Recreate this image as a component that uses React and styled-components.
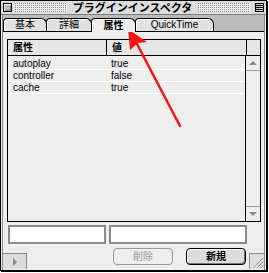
import React from "react";
import styled, { createGlobalStyle } from "styled-components";

const GlobalStyle = createGlobalStyle`
  html, body {
    margin: 0;
    padding: 0;
    background: #fff;
  }
  body {
    font-family: "Liberation Sans", "Noto Sans CJK JP", sans-serif;
    font-size: 10px;
    color: #000;
  }
`;

const tabs = [
  { label: "基本", width: 44 },
  { label: "詳細", width: 46 },
  { label: "属性", width: 45, active: true },
  { label: "QuickTime", width: 79 },
];

const rows = [
  { name: "autoplay", value: "true" },
  { name: "controller", value: "false" },
  { name: "cache", value: "true" },
];

const App = () => {
  return (
    <Stage>
      <GlobalStyle />
      <Window>
        <TitleBar>
          <CloseBox />
          <Stripes />
          <Title>プラグインインスペクタ</Title>
          <Stripes />
          <ShadeBox>
            <span />
            <span />
            <span />
          </ShadeBox>
        </TitleBar>
        <Body>
          <Frame>
            <TabStrip>
              {tabs.map((t) => (
                <Tab key={t.label} width={t.width} active={t.active}>
                  {t.label}
                </Tab>
              ))}
            </TabStrip>
            <Panel>
              <ListWrap>
                <List>
                  <Header>
                    <HeadCell width={98}>属性</HeadCell>
                    <HeadCell grow>値</HeadCell>
                    <HeadCell width={14} />
                  </Header>
                  <ListBody>
                    <Rows>
                      {rows.map((r) => (
                        <Row key={r.name}>
                          <NameCell>{r.name}</NameCell>
                          <ValueCell>{r.value}</ValueCell>
                        </Row>
                      ))}
                    </Rows>
                    <ScrollBar>
                      <ArrowBox>
                        <ArrowUp />
                      </ArrowBox>
                      <Track />
                      <ArrowBox bottom>
                        <ArrowDown />
                      </ArrowBox>
                    </ScrollBar>
                  </ListBody>
                </List>
              </ListWrap>
              <FieldRow>
                <Field width={98} />
                <Field width={138} />
              </FieldRow>
              <Footer>
                <ScrollStub>
                  <StubArrow />
                </ScrollStub>
                <Button disabled>削除</Button>
                <Button primary>新規</Button>
                <GrowBox>
                  <svg width="15" height="15" viewBox="0 0 15 15">
                    <path d="M5 14 L14 5 M9 14 L14 9 M13 14 L14 13" stroke="#fff" strokeWidth="1" />
                    <path d="M4 14 L14 4 M8 14 L14 8 M12 14 L14 12" stroke="#777" strokeWidth="1" />
                  </svg>
                </GrowBox>
              </Footer>
            </Panel>
          </Frame>
        </Body>
      </Window>
      <Annotation width="269" height="273" viewBox="0 0 269 273">
        <line x1="137" y1="44" x2="180" y2="126" stroke="#f51414" strokeWidth="2.5" strokeLinecap="round" />
        <path d="M128 29 L147 42 L138 43 L130 50 Z" fill="#f51414" />
      </Annotation>
    </Stage>
  );
};

const Stage = styled.div`
  position: relative;
  width: 269px;
  height: 273px;
  overflow: hidden;
`;

const Window = styled.div`
  box-sizing: border-box;
  width: 267px;
  height: 271px;
  border: 1px solid #000;
  box-shadow: 1px 1px 0 #000;
  background: #eee;
  display: flex;
  flex-direction: column;
`;

const TitleBar = styled.div`
  height: 13px;
  border-bottom: 1px solid #7a7a7a;
  background: #ddd;
  display: flex;
  align-items: center;
  padding: 0 2px 0 2px;
  gap: 3px;
`;

const CloseBox = styled.div`
  box-sizing: border-box;
  width: 9px;
  height: 9px;
  border: 1px solid #000;
  background: #bbb;
  box-shadow: inset 1px 1px 0 #fff, inset -1px -1px 0 #888;
`;

const Stripes = styled.div`
  flex: 1;
  height: 9px;
  background:
    linear-gradient(90deg, transparent 1px, #eee 1px) 0 0 / 2px 2px,
    linear-gradient(transparent 1px, #eee 1px) 0 0 / 2px 2px,
    #8a8a8a;
`;

const Title = styled.div`
  padding: 0 3px;
  font-family: "Noto Sans CJK JP", sans-serif;
  font-size: 11px;
  font-weight: 700;
  line-height: 13px;
  white-space: nowrap;
`;

const ShadeBox = styled.div`
  box-sizing: border-box;
  width: 9px;
  height: 9px;
  margin-left: 2px;
  border: 1px solid #000;
  background: #ccc;
  display: flex;
  flex-direction: column;
  justify-content: space-between;
  padding: 1px 0;

  span {
    display: block;
    height: 1px;
    background: #000;
  }
`;

const Body = styled.div`
  flex: 1;
  display: flex;
  padding: 0 1px;
  background: #eee;
`;

const Frame = styled.div`
  flex: 1;
  display: flex;
  flex-direction: column;
  border-left: 1px solid #8a8a8a;
  border-right: 1px solid #8a8a8a;
`;

const TabStrip = styled.div`
  height: 16px;
  box-sizing: border-box;
  padding-top: 3px;
  background: #bbb;
  display: flex;
  align-items: flex-start;
`;

const Tab = styled.div`
  box-sizing: border-box;
  width: ${(p) => p.width}px;
  height: ${(p) => (p.active ? 14 : 13)}px;
  margin-left: -1px;
  &:first-child {
    margin-left: 0;
  }
  border: 1px solid #000;
  border-bottom: none;
  border-radius: 4px 6px 0 0;
  background: ${(p) => (p.active ? "#eee" : "#e2e2e2")};
  box-shadow: inset 1px 1px 0 #fff;
  position: relative;
  z-index: ${(p) => (p.active ? 2 : 1)};
  display: flex;
  align-items: center;
  justify-content: center;
  font-size: 10px;
  font-weight: ${(p) => (p.active ? 700 : 400)};
  line-height: 12px;
`;

const Panel = styled.div`
  flex: 1;
  display: flex;
  flex-direction: column;
  border-top: 1px solid #000;
  background: #eee;
`;

const ListWrap = styled.div`
  padding: 7px 3px 0 4px;
`;

const List = styled.div`
  box-sizing: border-box;
  height: 183px;
  border: 1px solid #000;
  display: flex;
  flex-direction: column;
  background: #eee;
`;

const Header = styled.div`
  height: 15px;
  border-bottom: 1px solid #000;
  display: flex;
  background: #e6e6e6;
`;

const HeadCell = styled.div`
  box-sizing: border-box;
  width: ${(p) => (p.width ? `${p.width}px` : "auto")};
  flex: ${(p) => (p.grow ? 1 : "none")};
  padding-left: 5px;
  & + & {
    border-left: 1px solid #000;
  }
  font-weight: 700;
  line-height: 15px;
`;

const ListBody = styled.div`
  flex: 1;
  display: flex;
`;

const Rows = styled.div`
  flex: 1;
  padding-top: 2px;
`;

const Row = styled.div`
  height: 11px;
  border-bottom: 1px solid #fff;
  display: flex;
  line-height: 11px;
`;

const NameCell = styled.div`
  width: 99px;
  padding-left: 5px;
  box-sizing: border-box;
`;

const ValueCell = styled.div`
  padding-left: 4px;
`;

const ScrollBar = styled.div`
  width: 14px;
  border-left: 1px solid #000;
  display: flex;
  flex-direction: column;
`;

const ArrowBox = styled.div`
  height: 14px;
  display: flex;
  align-items: center;
  justify-content: center;
  ${(p) => (p.bottom ? "border-top: 1px solid #999;" : "border-bottom: 1px solid #999;")}
`;

const ArrowUp = styled.div`
  width: 0;
  height: 0;
  border-left: 4px solid transparent;
  border-right: 4px solid transparent;
  border-bottom: 4px solid #888;
`;

const ArrowDown = styled(ArrowUp)`
  border-bottom: none;
  border-top: 4px solid #888;
`;

const Track = styled.div`
  flex: 1;
`;

const FieldRow = styled.div`
  display: flex;
  gap: 3px;
  padding: 3px 0 0 5px;
`;

const Field = styled.div`
  box-sizing: border-box;
  width: ${(p) => p.width}px;
  height: 19px;
  border: 2px solid #8c8c8c;
  background: #fff;
`;

const Footer = styled.div`
  flex: 1;
  display: flex;
  align-items: flex-start;
  padding-top: 4px;
`;

const ScrollStub = styled.div`
  box-sizing: border-box;
  align-self: flex-end;
  width: 24px;
  height: 16px;
  margin-bottom: 1px;
  border-top: 1px solid #8a8a8a;
  border-right: 1px solid #8a8a8a;
  background: #ddd;
  display: flex;
  align-items: center;
  justify-content: center;
`;

const StubArrow = styled.div`
  width: 0;
  height: 0;
  border-top: 4px solid transparent;
  border-bottom: 4px solid transparent;
  border-left: 4px solid #888;
`;

const Button = styled.div`
  box-sizing: border-box;
  width: 60px;
  height: 17px;
  margin-left: ${(p) => (p.primary ? 13 : 86)}px;
  border: 1px solid ${(p) => (p.disabled ? "#999" : "#000")};
  border-radius: 4px;
  background: ${(p) => (p.disabled ? "#eee" : "#ddd")};
  box-shadow: ${(p) =>
    p.disabled ? "none" : "inset 1px 1px 0 #fff, inset -1px -1px 0 #777"};
  color: ${(p) => (p.disabled ? "#999" : "#000")};
  font-weight: ${(p) => (p.primary ? 700 : 400)};
  display: flex;
  align-items: center;
  justify-content: center;
  line-height: 15px;
`;

const GrowBox = styled.div`
  align-self: flex-end;
  width: 15px;
  height: 16px;
  margin-left: auto;
  margin-right: 0;
  margin-bottom: 1px;
  border-top: 1px solid #8a8a8a;
  border-left: 1px solid #8a8a8a;
  background: #ddd;
  box-sizing: border-box;
  display: flex;
`;

const Annotation = styled.svg`
  position: absolute;
  left: 0;
  top: 0;
  pointer-events: none;
`;

export default App;
